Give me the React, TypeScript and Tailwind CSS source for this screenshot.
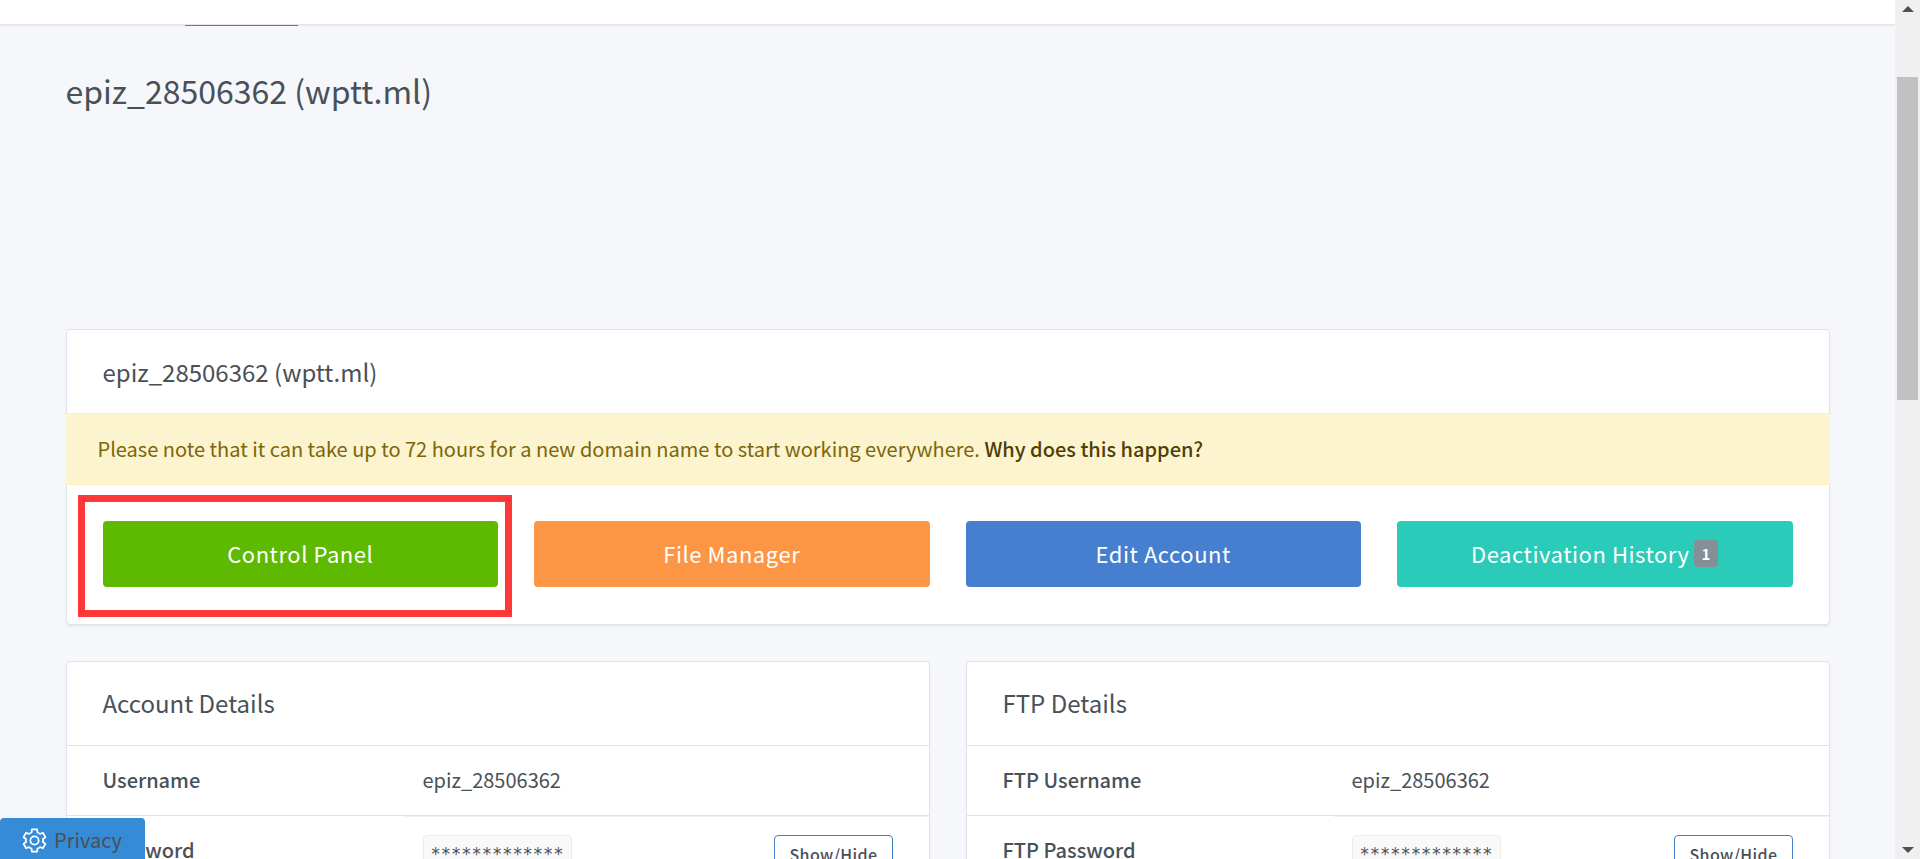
import { useState } from "react";

const ACTIONS = [
  { label: "Control Panel", color: "bg-[#5eba00]", marked: true },
  { label: "File Manager", color: "bg-[#fd9644]" },
  { label: "Edit Account", color: "bg-[#467fcf]" },
  { label: "Deactivation History", color: "bg-[#2bcbba]", count: 1 },
];

const CARD = "bg-white border border-[#dfe3ec] rounded-[4px] shadow-[0_2px_3px_rgba(0,0,0,0.05)]";

export default function App() {
  return (
    <div className="flex h-screen overflow-hidden bg-[#f5f7fb] text-[#495057] font-['Noto_Sans_CJK_SC','Source_Sans_Pro',sans-serif]">
      <main className="flex-1 min-w-0">
        {/* bottom edge of the navigation bar */}
        <nav className="h-[26px] bg-white border-b-2 border-[#e3e8ee]">
          <div className="max-w-[1800px] h-[26px] mx-auto px-[137px]">
            <div className="w-[113px] h-[26px] border-b border-[#467fcf]" />
          </div>
        </nav>

        <div className="max-w-[1800px] mx-auto px-[18px]">
          <h1 className="pt-11 text-[32px] leading-[40px]">epiz_28506362 (wptt.ml)</h1>

          <section className={`${CARD} mt-[219px]`}>
            <h2 className="px-9 py-[23px] text-[24px] leading-[37px]">epiz_28506362 (wptt.ml)</h2>
            <div className="-mx-px px-8 py-[17px] text-[20px] leading-[36px] bg-[#fcf3cf] border-y border-[#fbeebc] text-[#7d6608]">
              Please note that it can take up to 72 hours for a new domain name to start working everywhere.{" "}
              <a href="#" className="font-medium text-[#4d3f05]">Why does this happen?</a>
            </div>
            <div className="grid grid-cols-4 gap-9 px-9 pt-9 pb-[37px]">
              {ACTIONS.map((a) => (
                <div key={a.label} className="relative">
                  <button className={`w-full h-[66px] pb-px flex items-center justify-center gap-1 rounded-[4px] text-white text-[22px] tracking-wide ${a.color}`}>
                    {a.label}
                    {a.count && (
                      <span className="px-2 rounded-[4px] bg-[#868e96] text-[15px] leading-[27px] font-bold tracking-normal">{a.count}</span>
                    )}
                  </button>
                  {a.marked && (
                    <div className="absolute -left-[25px] -right-[14px] -top-[26px] -bottom-[30px] border-[7px] border-[#fc3838] pointer-events-none" />
                  )}
                </div>
              ))}
            </div>
          </section>

          <div className="grid grid-cols-2 gap-9 mt-9">
            <Details title="Account Details" userLabel="Username" passLabel="Password" labelWidth="w-[338px]" />
            <Details title="FTP Details" userLabel="FTP Username" passLabel="FTP Password" labelWidth="w-[367px]" />
          </div>
        </div>
      </main>

      <Scrollbar />

      <button className="fixed left-0 bottom-0 w-[145px] h-[41px] pl-[22px] pt-[3px] flex items-center gap-[7px] rounded-t-[4px] bg-[#368bd6] text-[20px] leading-[30px]">
        <GearIcon />
        Privacy
      </button>
    </div>
  );
}

type DetailsProps = { title: string; userLabel: string; passLabel: string; labelWidth: string };

function Details({ title, userLabel, passLabel, labelWidth }: DetailsProps) {
  const [shown, setShown] = useState(false);
  return (
    <section className={CARD}>
      <h2 className="px-9 pt-[22px] pb-6 text-[24px] leading-[37px]">{title}</h2>
      <table className="w-full text-left text-[20px] leading-[33px]">
        <tbody>
          <tr className="border-t border-[#dfe3ec]">
            <th className={`${labelWidth} pl-9 pt-[17px] pb-[19px] font-medium`}>{userLabel}</th>
            <td className="pl-[18px] pt-[17px] pb-[19px]" colSpan={2}>epiz_28506362</td>
          </tr>
          <tr className="border-t border-[#dfe3ec] align-top">
            <th className="pl-9 pt-[17px] pb-[19px] font-medium">{passLabel}</th>
            <td className="pl-[18px] py-[19px] shadow-[inset_0_1px_0_#edf0f4]">
              <code className="block w-fit px-[7px] border border-[#ececec] rounded-[4px] bg-[#f9f9f9] font-['DejaVu_Sans_Mono',monospace] text-[17px] leading-[37px]">
                {shown ? "epiz_28506362" : "*************"}
              </code>
            </td>
            <td className="pr-9 py-[19px] shadow-[inset_0_1px_0_#edf0f4]">
              <button
                onClick={() => setShown(!shown)}
                className="block ml-auto px-[14px] border border-[#467fcf] rounded-[4px] text-[16px] leading-[36px] font-medium tracking-wide"
              >
                Show/Hide
              </button>
            </td>
          </tr>
        </tbody>
      </table>
    </section>
  );
}

function GearIcon() {
  return (
    <svg viewBox="0 0 24 24" className="w-[25px] h-[25px] fill-none stroke-white" strokeWidth="1.7" strokeLinejoin="round">
      <path d="M9.5 1.3h5l.3 3q1.4.4 2.5 1.4L20 4.5l2.5 4.3-2.4 1.8q.3 1.4 0 2.8l2.4 1.8-2.5 4.3-2.7-1.2q-1.1 1-2.5 1.4l-.3 3h-5l-.3-3q-1.4-.4-2.5-1.4L4 19.5l-2.5-4.3 2.4-1.8q-.3-1.4 0-2.8L1.5 8.8 4 4.5l2.7 1.2q1.1-1 2.5-1.4z" />
      <circle cx="12" cy="12" r="4" />
    </svg>
  );
}

function Scrollbar() {
  return (
    <div className="w-[25px] shrink-0 flex flex-col items-center bg-[#f0f0f0]">
      <svg viewBox="0 0 12 6" className="w-3 h-[6px] mt-[6px] fill-[#505050]"><path d="M6 0l6 6H0z" /></svg>
      <div className="w-[21px] h-[323px] mt-[65px] bg-[#c1c1c1]" />
      <svg viewBox="0 0 12 6" className="w-3 h-[6px] mt-auto mb-[6px] fill-[#505050]"><path d="M0 0h12L6 6z" /></svg>
    </div>
  );
}
